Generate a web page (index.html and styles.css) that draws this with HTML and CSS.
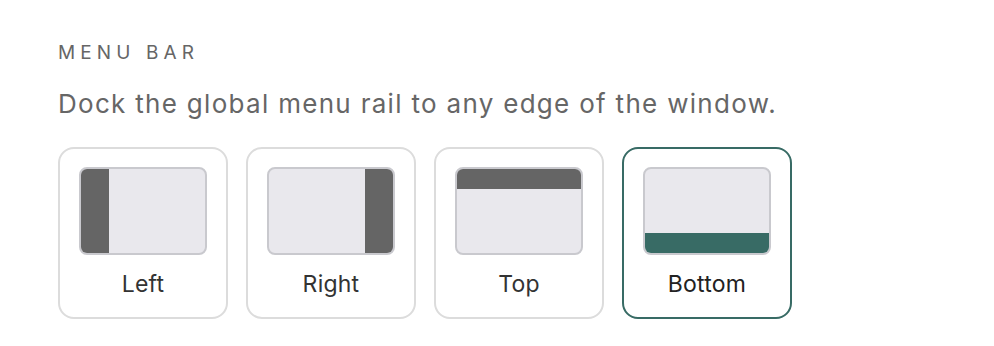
FILE: index.html
```html
<!DOCTYPE html>
<html lang="en">
  <head>
    <meta charset="UTF-8" />
    <meta name="viewport" content="width=device-width, initial-scale=1.0" />
    <title>Menu bar</title>
    <link rel="stylesheet" href="styles.css">
  </head>
  <body>
    <section class="setting">
      <h2 class="setting__title">Menu bar</h2>
      <p class="setting__hint">Dock the global menu rail to any edge of the window.</p>

      <div class="dock-options">
        <button class="dock">
          <span class="dock__preview dock__preview_left"><span class="dock__rail"></span></span>
          <span class="dock__label">Left</span>
        </button>
        <button class="dock">
          <span class="dock__preview dock__preview_right"><span class="dock__rail"></span></span>
          <span class="dock__label">Right</span>
        </button>
        <button class="dock">
          <span class="dock__preview dock__preview_top"><span class="dock__rail"></span></span>
          <span class="dock__label">Top</span>
        </button>
        <button class="dock dock_active">
          <span class="dock__preview dock__preview_bottom"><span class="dock__rail"></span></span>
          <span class="dock__label">Bottom</span>
        </button>
      </div>
    </section>
  </body>
</html>
```

FILE: styles.css
```css
body {
  margin: 0;
  background: #fff;
  font-family: Inter, "Noto Sans", sans-serif;
}

.setting {
  padding: 41px 58px;
}

.setting__title {
  margin: 0;
  font-size: 19px;
  font-weight: 400;
  line-height: 24px;
  letter-spacing: 0.27em;
  text-transform: uppercase;
  color: #666;
}

.setting__hint {
  margin: 23px 0 0;
  font-size: 26px;
  line-height: 32px;
  letter-spacing: 0.05em;
  color: #666;
}

.dock-options {
  display: flex;
  gap: 18px;
  margin-top: 27px;
}

.dock {
  display: flex;
  flex-direction: column;
  align-items: center;
  box-sizing: border-box;
  width: 170px;
  height: 172px;
  padding: 18px 19px 0;
  border: 2px solid #dcdcdc;
  border-radius: 16px;
  background: #fff;
  font: inherit;
  cursor: pointer;
}

.dock_active {
  border-color: #386b65;
}

.dock__preview {
  display: flex;
  box-sizing: border-box;
  width: 128px;
  height: 88px;
  border: 2px solid #c9c9ce;
  border-radius: 8px;
  background: #e9e8ed;
  overflow: hidden;
}

.dock__preview_left {
  flex-direction: row;
}

.dock__preview_right {
  flex-direction: row-reverse;
}

.dock__preview_top {
  flex-direction: column;
}

.dock__preview_bottom {
  flex-direction: column-reverse;
}

.dock__rail {
  background: #656565;
}

.dock__preview_left .dock__rail,
.dock__preview_right .dock__rail {
  width: 28px;
}

.dock__preview_top .dock__rail,
.dock__preview_bottom .dock__rail {
  height: 20px;
}

.dock_active .dock__rail {
  background: #386b65;
}

.dock__label {
  margin-top: 15px;
  font-size: 23px;
  line-height: 28px;
  letter-spacing: 0.01em;
  color: #333;
}

.dock_active .dock__label {
  color: #222;
}
```
